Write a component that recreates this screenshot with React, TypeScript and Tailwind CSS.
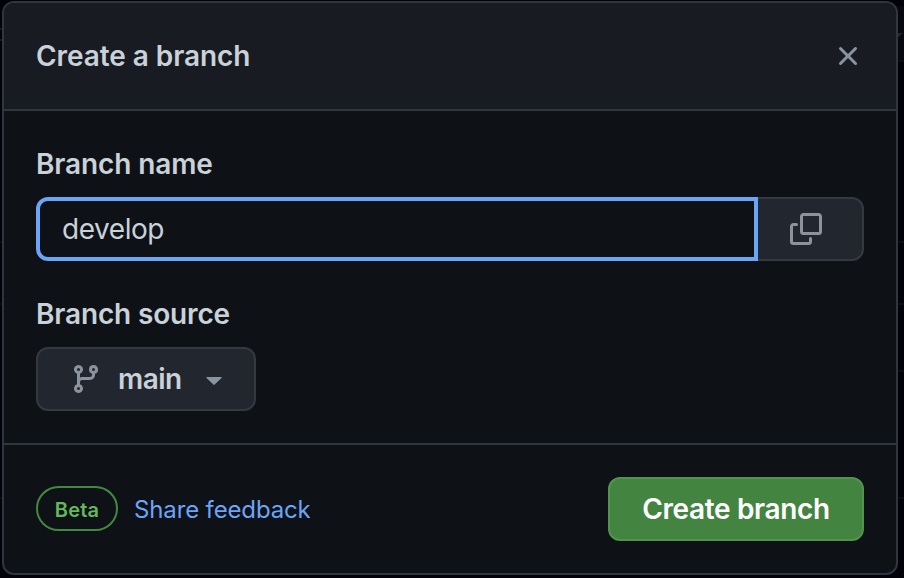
import React from "react";

function Octicon({ d, className }: { d: string; className: string }) {
  return (
    <svg viewBox="0 0 16 16" className={`size-8 shrink-0 fill-current ${className}`} aria-hidden="true">
      <path d={d} />
    </svg>
  );
}

const X_PATH =
  "M3.72 3.72a.75.75 0 0 1 1.06 0L8 6.94l3.22-3.22a.749.749 0 0 1 1.275.326.749.749 0 0 1-.215.734L9.06 8l3.22 3.22a.749.749 0 0 1-.326 1.275.749.749 0 0 1-.734-.215L8 9.06l-3.22 3.22a.751.751 0 0 1-1.042-.018.751.751 0 0 1-.018-1.042L6.94 8 3.72 4.78a.75.75 0 0 1 0-1.06Z";
const COPY_PATH =
  "M0 6.75C0 5.784.784 5 1.75 5h1.5a.75.75 0 0 1 0 1.5h-1.5a.25.25 0 0 0-.25.25v7.5c0 .138.112.25.25.25h7.5a.25.25 0 0 0 .25-.25v-1.5a.75.75 0 0 1 1.5 0v1.5A1.75 1.75 0 0 1 9.25 16h-7.5A1.75 1.75 0 0 1 0 14.25ZM5 1.75C5 .784 5.784 0 6.75 0h7.5C15.216 0 16 .784 16 1.75v7.5A1.75 1.75 0 0 1 14.25 11h-7.5A1.75 1.75 0 0 1 5 9.25Zm1.75-.25a.25.25 0 0 0-.25.25v7.5c0 .138.112.25.25.25h7.5a.25.25 0 0 0 .25-.25v-7.5a.25.25 0 0 0-.25-.25Z";
const BRANCH_PATH =
  "M9.5 3.25a2.25 2.25 0 1 1 3 2.122V6A2.5 2.5 0 0 1 10 8.5H6a1 1 0 0 0-1 1v1.128a2.251 2.251 0 1 1-1.5 0V5.372a2.25 2.25 0 1 1 1.5 0v1.836A2.493 2.493 0 0 1 6 7h4a1 1 0 0 0 1-1v-.628A2.25 2.25 0 0 1 9.5 3.25Zm-6 0a.75.75 0 1 0 1.5 0 .75.75 0 0 0-1.5 0Zm8.25-.75a.75.75 0 1 0 0 1.5.75.75 0 0 0 0-1.5ZM4.25 12a.75.75 0 1 0 0 1.5.75.75 0 0 0 0-1.5Z";

/* Dimmed traces of the page that lies behind the dialog. */
function Backdrop() {
  return (
    <svg viewBox="0 0 904 578" className="absolute inset-0 h-[578px] w-[904px]" aria-hidden="true">
      <path d="M896 6h8v55h-8Z" fill="#07090e" />
      <path d="M0 29h2M0 40h2" stroke="#191b20" strokeWidth="2" />
      <path d="M896 33h7l-7 6Z" fill="#25272c" />
      <path d="M898 61h6M898 242h6M898 304h6M898 371h6M898 498h6M0 242h2M0 304h2M0 498h2" stroke="#0b0d13" strokeWidth="2" />
    </svg>
  );
}

export default function App() {
  return (
    <div className="relative h-[578px] w-[904px] overflow-hidden bg-[#02030a] pt-px pl-0.5 font-['Inter',sans-serif] text-[28px] leading-8 text-[#c9d1d9]">
      <Backdrop />
      <div className="relative flex h-[574px] w-[896px] flex-col overflow-hidden rounded-xl border-2 border-[#30363d] bg-[#0e1116]">
        <header className="flex h-[108px] shrink-0 items-center justify-between border-b-2 border-[#30363d] bg-[#181b22] px-8">
          <h1 className="text-[28px] font-semibold tracking-[-0.07px]">Create a branch</h1>
          <button type="button" aria-label="Close" className="text-[#8b949e]">
            <Octicon d={X_PATH} className="" />
          </button>
        </header>

        <main className="flex h-[332px] shrink-0 flex-col px-8 pt-[37px]">
          <label htmlFor="branch-name" className="font-semibold tracking-[-0.12px]">Branch name</label>
          <div className="mt-[17px] flex h-16">
            <input
              id="branch-name"
              defaultValue="develop"
              className="h-16 w-[722px] rounded-l-xl border-4 border-[#6ca4f8] bg-[#0e1116] pl-[22px] tracking-[-0.45px] outline-none"
            />
            <button
              type="button"
              aria-label="Copy"
              className="flex h-16 w-[106px] items-center rounded-r-xl border-2 border-l-0 border-[#35393f] bg-[#22262e] pl-8 text-[#8b949e]"
            >
              <Octicon d={COPY_PATH} className="" />
            </button>
          </div>
          <div className="mt-[37px] font-semibold tracking-[-0.15px]">Branch source</div>
          <button
            type="button"
            className="mt-[17px] flex h-16 w-[220px] items-center rounded-xl border-2 border-[#35393f] bg-[#22262e] pl-8"
          >
            <Octicon d={BRANCH_PATH} className="text-[#8b949e]" />
            <span className="ml-4 w-[88px] text-left font-semibold tracking-[-0.55px]">main</span>
            <svg viewBox="0 0 16 8" className="mt-1 h-2 w-4 fill-[#8b949e]" aria-hidden="true">
              <path d="M.9 0h14.2c.5 0 .7.6.4.9L8.4 7.8c-.2.2-.6.2-.8 0L.5.9C.2.6.4 0 .9 0Z" />
            </svg>
          </button>
        </main>

        <footer className="flex h-[130px] items-center justify-between border-t-2 border-[#30363d] px-8">
          <div className="flex h-[46px] items-start gap-4">
            <span className="flex h-[45px] w-[82px] items-center justify-center rounded-full border-2 border-[#43883f] pt-[3px] text-[20px] font-semibold tracking-[0.2px] text-[#65b75c]">
              Beta
            </span>
            <a className="text-[24px] leading-[47px] tracking-[-0.14px] text-[#6ca4f8]">Share feedback</a>
          </div>
          <button
            type="button"
            className="h-16 w-64 rounded-xl border-2 border-[#54934f] bg-[#438440] font-semibold tracking-[-0.35px] text-white"
          >
            Create branch
          </button>
        </footer>
      </div>
    </div>
  );
}
